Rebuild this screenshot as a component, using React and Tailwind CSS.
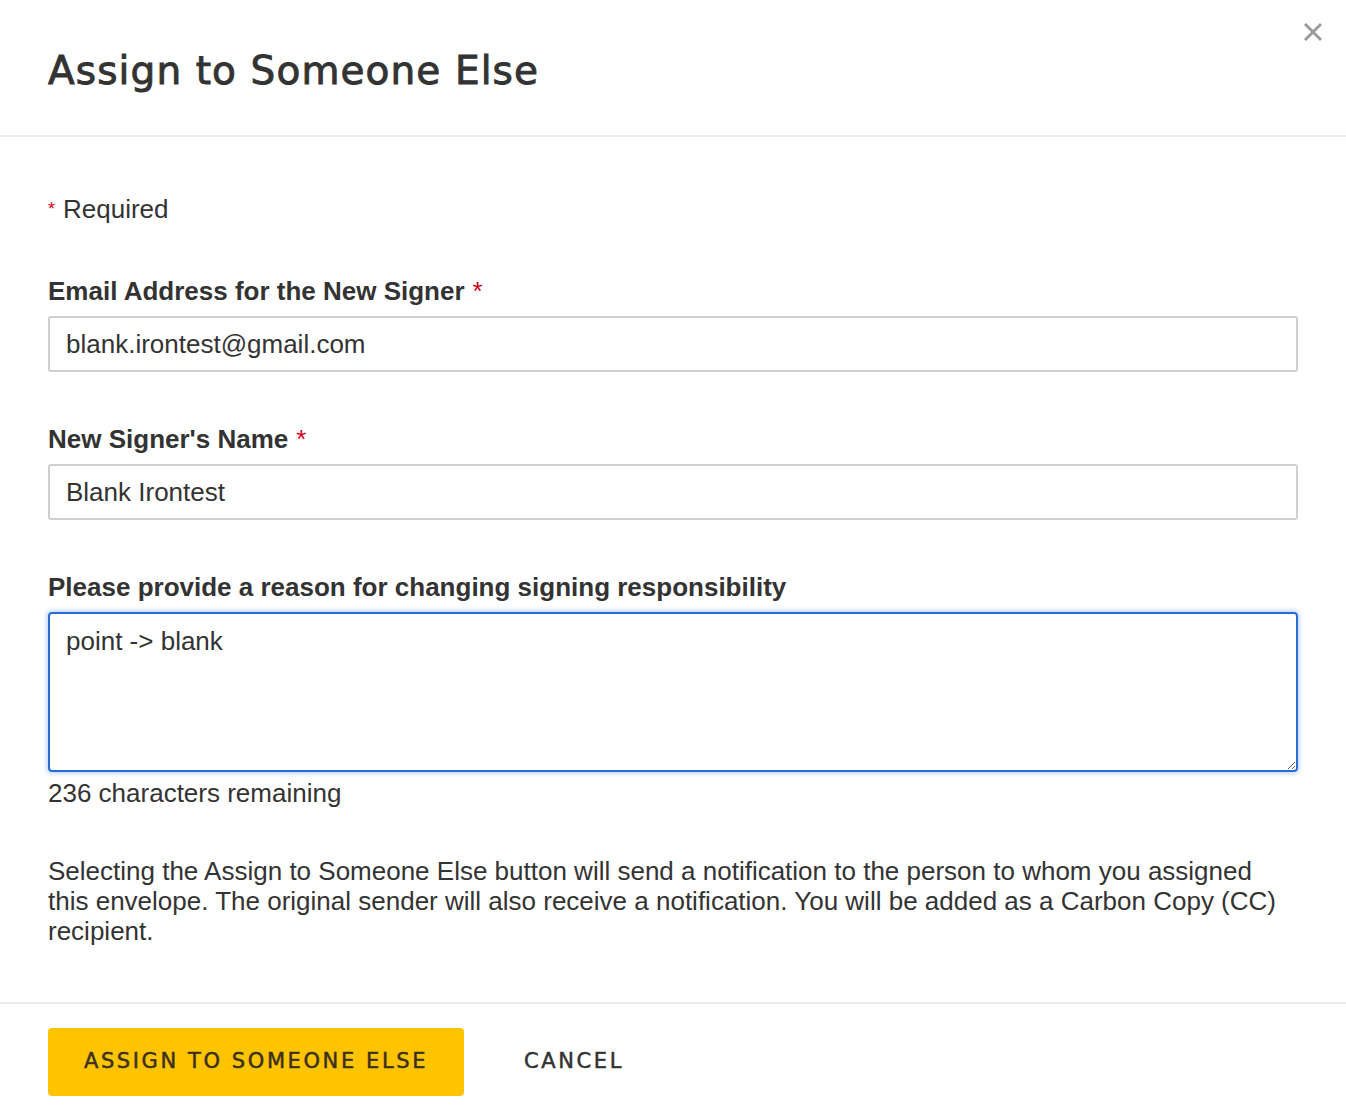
import React, { useState } from "react";

const TITLE_FONT = { fontFamily: '"DejaVu Sans", sans-serif' };

function Label({ children, required }) {
  return (
    <label className="block text-[26px] font-bold leading-[30px] text-[#333]">
      {children}
      {required && <span className="ml-2 text-[#d0021b] font-normal">*</span>}
    </label>
  );
}

export default function App() {
  const [email, setEmail] = useState("blank.irontest@gmail.com");
  const [name, setName] = useState("Blank Irontest");
  const [reason, setReason] = useState("point -> blank");

  return (
    <div
      className="relative min-h-screen w-[1346px] bg-white text-[#333]"
      style={{ fontFamily: '"Liberation Sans", Arial, sans-serif' }}
    >
      <header className="h-[137px] border-b-2 border-[#eaeaea] pl-12 pt-[43px]">
        <h1
          className="text-[39px] font-normal leading-[56px] tracking-[1.1px] text-[#333] [-webkit-text-stroke:0.9px_#333]"
          style={TITLE_FONT}
        >
          Assign to Someone Else
        </h1>
        <button className="absolute right-[22px] top-[21px] text-[#9b9b9b]" aria-label="Close">
          <svg width="22" height="22" viewBox="0 0 22 22">
            <path d="M3 3 L19 19 M19 3 L3 19" stroke="currentColor" strokeWidth="3" />
          </svg>
        </button>
      </header>

      <main className="px-12 pt-[57px] pb-[56px]">
        <p className="text-[26px] leading-[30px]">
          <span className="mr-2 text-[18px] align-top text-[#d0021b]">*</span>Required
        </p>

        <div className="mt-[52px]">
          <Label required>Email Address for the New Signer</Label>
          <input
            value={email}
            onChange={(e) => setEmail(e.target.value)}
            className="mt-[10px] block h-[56px] w-full rounded-[3px] border-2 border-[#cfcfcf] px-4 text-[26px] text-[#333] outline-none"
          />
        </div>

        <div className="mt-[52px]">
          <Label required>New Signer's Name</Label>
          <input
            value={name}
            onChange={(e) => setName(e.target.value)}
            className="mt-[10px] block h-[56px] w-full rounded-[3px] border-2 border-[#cfcfcf] px-4 text-[26px] text-[#333] outline-none"
          />
        </div>

        <div className="mt-[52px]">
          <Label>Please provide a reason for changing signing responsibility</Label>
          <textarea
            value={reason}
            onChange={(e) => setReason(e.target.value)}
            className="mt-[10px] block h-[160px] w-full rounded-[4px] border-2 border-[#2a6dd2] px-4 py-[10px] text-[26px] leading-[34px] text-[#333] outline-none shadow-[0_0_4px_2px_rgba(90,150,240,0.35)]"
          />
          <p className="mt-[6px] text-[26px] leading-[30px]">236 characters remaining</p>
        </div>

        <p className="mt-[48px] text-[26px] leading-[30px]">
          Selecting the Assign to Someone Else button will send a notification to the person to whom you assigned
          this envelope. The original sender will also receive a notification. You will be added as a Carbon Copy (CC)
          recipient.
        </p>
      </main>

      <footer className="flex items-center gap-[60px] border-t-2 border-[#eaeaea] px-12 pt-[24px] pb-6">
        <button
          className="h-[68px] w-[416px] rounded-[4px] bg-[#ffc400] text-[21px] font-normal tracking-[2.6px] text-[#3b3020] [-webkit-text-stroke:0.5px_#3b3020]"
          style={TITLE_FONT}
        >
          ASSIGN TO SOMEONE ELSE
        </button>
        <button
          className="text-[21px] font-normal tracking-[2.6px] text-[#333] [-webkit-text-stroke:0.5px_#333]"
          style={TITLE_FONT}
        >
          CANCEL
        </button>
      </footer>
    </div>
  );
}
